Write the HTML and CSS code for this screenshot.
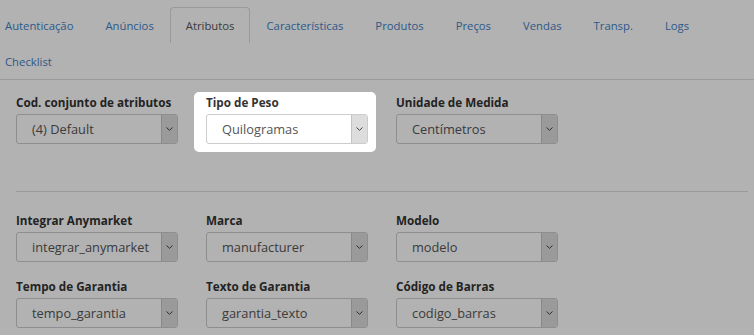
FILE: index.html
```html
<!DOCTYPE html>
<html lang="pt-BR">
<head>
  <meta charset="UTF-8">
  <title>Produto - Atributos</title>
  <link rel="stylesheet" href="styles.css">
</head>
<body>

  <nav class="tabs">
    <ul>
      <li><a href="#">Autenticação</a></li>
      <li><a href="#">Anúncios</a></li>
      <li class="active"><a href="#">Atributos</a></li>
      <li><a href="#">Características</a></li>
      <li><a href="#">Produtos</a></li>
      <li><a href="#">Preços</a></li>
      <li><a href="#">Vendas</a></li>
      <li><a href="#">Transp.</a></li>
      <li><a href="#">Logs</a></li>
      <li><a href="#">Checklist</a></li>
    </ul>
  </nav>

  <div class="panel">
    <div class="fields fields-top">
      <div class="field">
        <label>Cod. conjunto de atributos</label>
        <div class="select"><span class="select-value">(4) Default</span><span class="select-btn"><svg width="7" height="4" viewBox="0 0 7 4"><path d="M0.5 0.5 L3.5 3.3 L6.5 0.5" fill="none" stroke="#444" stroke-width="1"/></svg></span></div>
      </div>
      <div class="field highlight">
        <label>Tipo de Peso</label>
        <div class="select"><span class="select-value">Quilogramas</span><span class="select-btn"><svg width="7" height="4" viewBox="0 0 7 4"><path d="M0.5 0.5 L3.5 3.3 L6.5 0.5" fill="none" stroke="#444" stroke-width="1"/></svg></span></div>
      </div>
      <div class="field">
        <label>Unidade de Medida</label>
        <div class="select"><span class="select-value">Centímetros</span><span class="select-btn"><svg width="7" height="4" viewBox="0 0 7 4"><path d="M0.5 0.5 L3.5 3.3 L6.5 0.5" fill="none" stroke="#444" stroke-width="1"/></svg></span></div>
      </div>
    </div>

    <hr class="divider">

    <div class="fields">
      <div class="field">
        <label>Integrar Anymarket</label>
        <div class="select"><span class="select-value">integrar_anymarket</span><span class="select-btn"><svg width="7" height="4" viewBox="0 0 7 4"><path d="M0.5 0.5 L3.5 3.3 L6.5 0.5" fill="none" stroke="#444" stroke-width="1"/></svg></span></div>
      </div>
      <div class="field">
        <label>Marca</label>
        <div class="select"><span class="select-value">manufacturer</span><span class="select-btn"><svg width="7" height="4" viewBox="0 0 7 4"><path d="M0.5 0.5 L3.5 3.3 L6.5 0.5" fill="none" stroke="#444" stroke-width="1"/></svg></span></div>
      </div>
      <div class="field">
        <label>Modelo</label>
        <div class="select"><span class="select-value">modelo</span><span class="select-btn"><svg width="7" height="4" viewBox="0 0 7 4"><path d="M0.5 0.5 L3.5 3.3 L6.5 0.5" fill="none" stroke="#444" stroke-width="1"/></svg></span></div>
      </div>
      <div class="field">
        <label>Tempo de Garantia</label>
        <div class="select"><span class="select-value">tempo_garantia</span><span class="select-btn"><svg width="7" height="4" viewBox="0 0 7 4"><path d="M0.5 0.5 L3.5 3.3 L6.5 0.5" fill="none" stroke="#444" stroke-width="1"/></svg></span></div>
      </div>
      <div class="field">
        <label>Texto de Garantia</label>
        <div class="select"><span class="select-value">garantia_texto</span><span class="select-btn"><svg width="7" height="4" viewBox="0 0 7 4"><path d="M0.5 0.5 L3.5 3.3 L6.5 0.5" fill="none" stroke="#444" stroke-width="1"/></svg></span></div>
      </div>
      <div class="field">
        <label>Código de Barras</label>
        <div class="select"><span class="select-value">codigo_barras</span><span class="select-btn"><svg width="7" height="4" viewBox="0 0 7 4"><path d="M0.5 0.5 L3.5 3.3 L6.5 0.5" fill="none" stroke="#444" stroke-width="1"/></svg></span></div>
      </div>
    </div>
  </div>

  <!-- tour overlay, the highlighted field sits above it -->
  <div class="overlay"></div>

</body>
</html>
```

FILE: styles.css
```css
html {
  font-family: 'Open Sans', sans-serif;
}

body {
  margin: 0;
  background-color: #fff;
  overflow: hidden;
}

/* tabs */
.tabs {
  padding-top: 7px;
}

.tabs ul {
  list-style: none;
  margin: 0 0 0 -11px;
  padding: 0;
  display: flex;
  flex-wrap: wrap;
  border-bottom: 1px solid #ddd;
}

.tabs a {
  display: block;
  padding: 9px 15px;
  font-size: 11.3px;
  line-height: 17px;
  color: #4281c6;
  text-decoration: none;
  border: 1px solid transparent;
  border-bottom: 0;
  border-radius: 4px 4px 0 0;
}

.tabs .active a {
  color: #555;
  border-color: #ddd;
  background-color: #fff;
}

/* form */
.panel {
  padding: 13px 0 0 16px;
}

.fields {
  display: flex;
  flex-wrap: wrap;
  width: 570px;
  row-gap: 15px;
}

.fields-top {
  margin-bottom: 47px;
}

.field {
  width: 162px;
  margin-right: 28px;
}

.field label {
  display: block;
  font-size: 11.7px;
  font-weight: bold;
  line-height: 18px;
  color: #333;
  margin-bottom: 3px;
  white-space: nowrap;
}

.select {
  display: flex;
  height: 30px;
  box-sizing: border-box;
  border: 1px solid #ccc;
  border-radius: 3px;
  background-color: #fff;
  overflow: hidden;
}

.select-value {
  flex: 1;
  padding-left: 15px;
  font-size: 12.8px;
  line-height: 28px;
  color: #555;
  white-space: nowrap;
}

.select-btn {
  width: 15px;
  border-left: 1px solid #c4c4c4;
  background-color: #ddd;
  display: flex;
  align-items: center;
  justify-content: center;
}

.divider {
  border: 0;
  border-top: 1px solid #ddd;
  margin: 0 6px 19px 0;
}

/* tour */
.overlay {
  position: fixed;
  inset: 0;
  background-color: rgba(0, 0, 0, 0.3);
  z-index: 10;
}

.highlight {
  position: relative;
  z-index: 11;
  background-color: #fff;
  border-radius: 5px;
  padding: 1px 8px 8px 12px;
  margin: -1px 20px -8px -12px;
}
```
